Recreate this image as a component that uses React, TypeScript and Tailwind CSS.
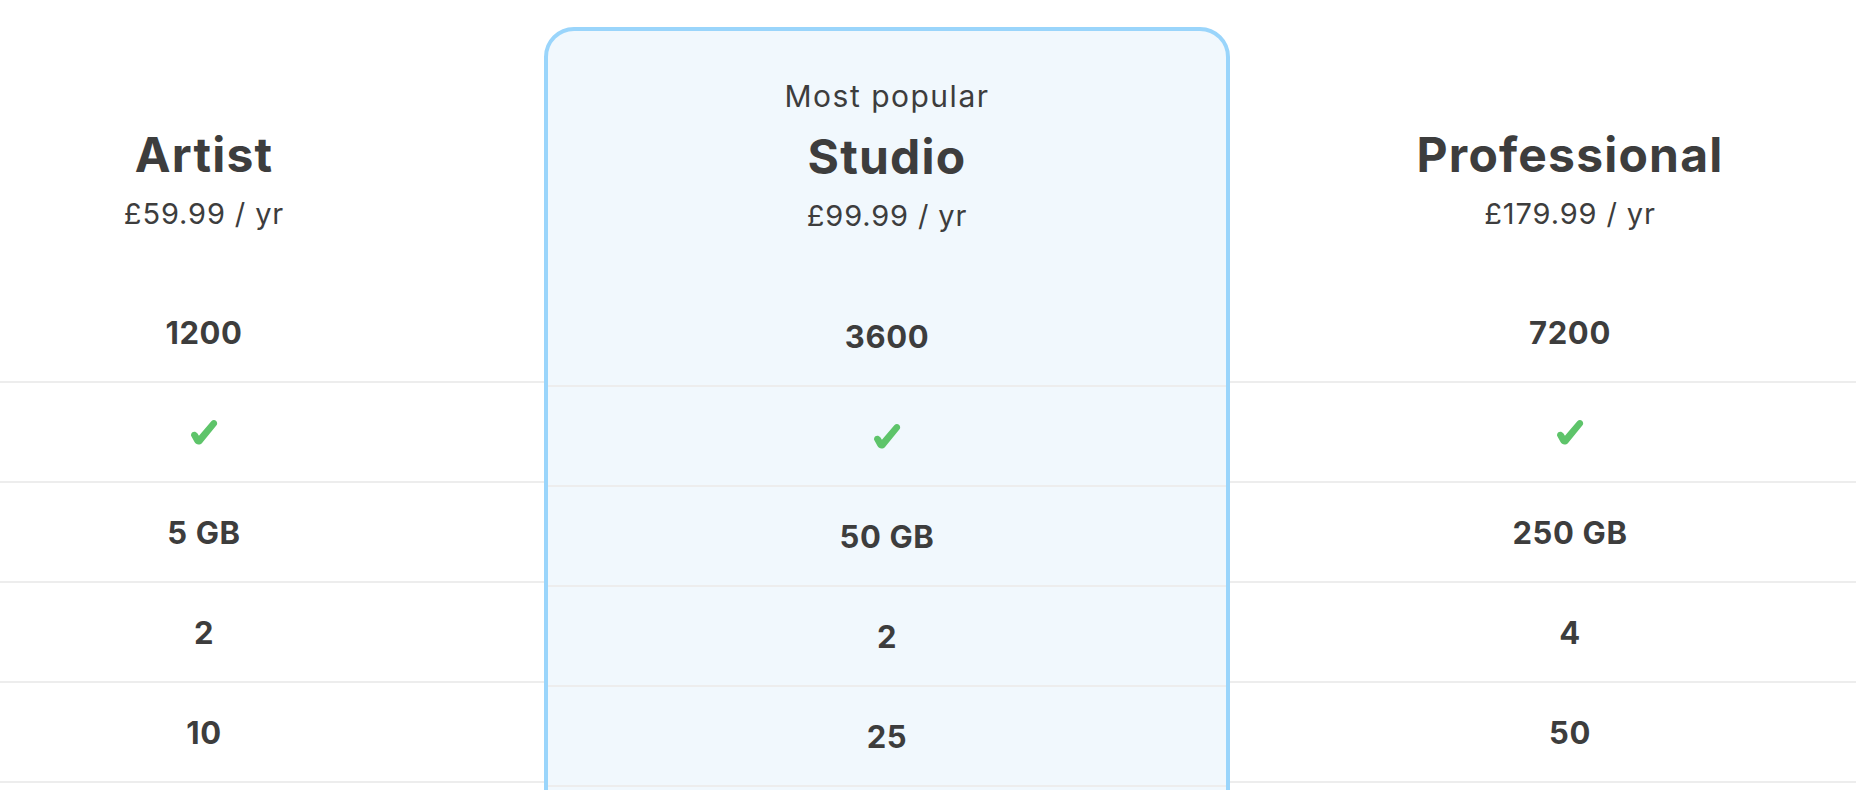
const plans = [
  { name: 'Artist', price: '£59.99 / yr', values: ['1200', true, '5 GB', '2', '10'] },
  { name: 'Studio', price: '£99.99 / yr', values: ['3600', true, '50 GB', '2', '25'] },
  { name: 'Professional', price: '£179.99 / yr', values: ['7200', true, '250 GB', '4', '50'] },
];

function Check() {
  return (
    <svg width="28" height="26" viewBox="0 0 26 24" className="block">
      <path
        d="M1 15.4 C0.4 11.8 4.8 10.4 6.8 13.2 L8.3 15.4 L19.8 2 C22.4 -0.6 26.6 2 24.8 5.6 L11.2 22.2 C9.4 24.4 5.4 24.2 4.2 21.4 Z"
        fill="#5ec46a"
      />
    </svg>
  );
}

function Cell({ value }: { value: string | boolean }) {
  return (
    <div className="h-[100px] border-b-2 border-[#ededed] flex items-center justify-center">
      {value === true ? (
        <Check />
      ) : (
        <span className="text-[31px] font-bold leading-none tracking-[0.02em]">{value}</span>
      )}
    </div>
  );
}

function Header({ name, price }: { name: string; price: string }) {
  return (
    <div className="h-[283px] pt-[131px] flex flex-col items-center">
      <h2 className="text-[48px] font-bold leading-none tracking-[0.025em]">{name}</h2>
      <p className="mt-[20px] text-[29px] leading-none tracking-[0.03em]">{price}</p>
    </div>
  );
}

export default function App() {
  const [artist, studio, pro] = plans;
  return (
    <div
      className="h-[790px] w-full overflow-hidden bg-white text-[#3d3d3d]"
      style={{ fontFamily: 'Inter, "Noto Sans", sans-serif' }}
    >
      <div className="flex ml-[-136px] w-[2046px]">
        {/* left plan */}
        <div className="w-[680px] shrink-0">
          <Header name={artist.name} price={artist.price} />
          {artist.values.map((v, i) => (
            <Cell key={i} value={v} />
          ))}
          <div className="h-[100px]" />
        </div>

        {/* highlighted plan */}
        <div className="w-[686px] shrink-0 mt-[27px] border-4 border-[#9ad5fb] bg-[#f1f8fd] rounded-[30px]">
          <div className="h-[256px] pt-[50px] flex flex-col items-center">
            <p className="text-[30px] leading-none tracking-[0.05em]">Most popular</p>
            <h2 className="mt-[22px] text-[48px] font-bold leading-none tracking-[0.025em]">{studio.name}</h2>
            <p className="mt-[20px] text-[29px] leading-none tracking-[0.03em]">{studio.price}</p>
          </div>
          {studio.values.map((v, i) => (
            <Cell key={i} value={v} />
          ))}
          <div className="h-[100px]" />
        </div>

        {/* right plan */}
        <div className="w-[680px] shrink-0">
          <Header name={pro.name} price={pro.price} />
          {pro.values.map((v, i) => (
            <Cell key={i} value={v} />
          ))}
          <div className="h-[100px]" />
        </div>
      </div>
    </div>
  );
}
